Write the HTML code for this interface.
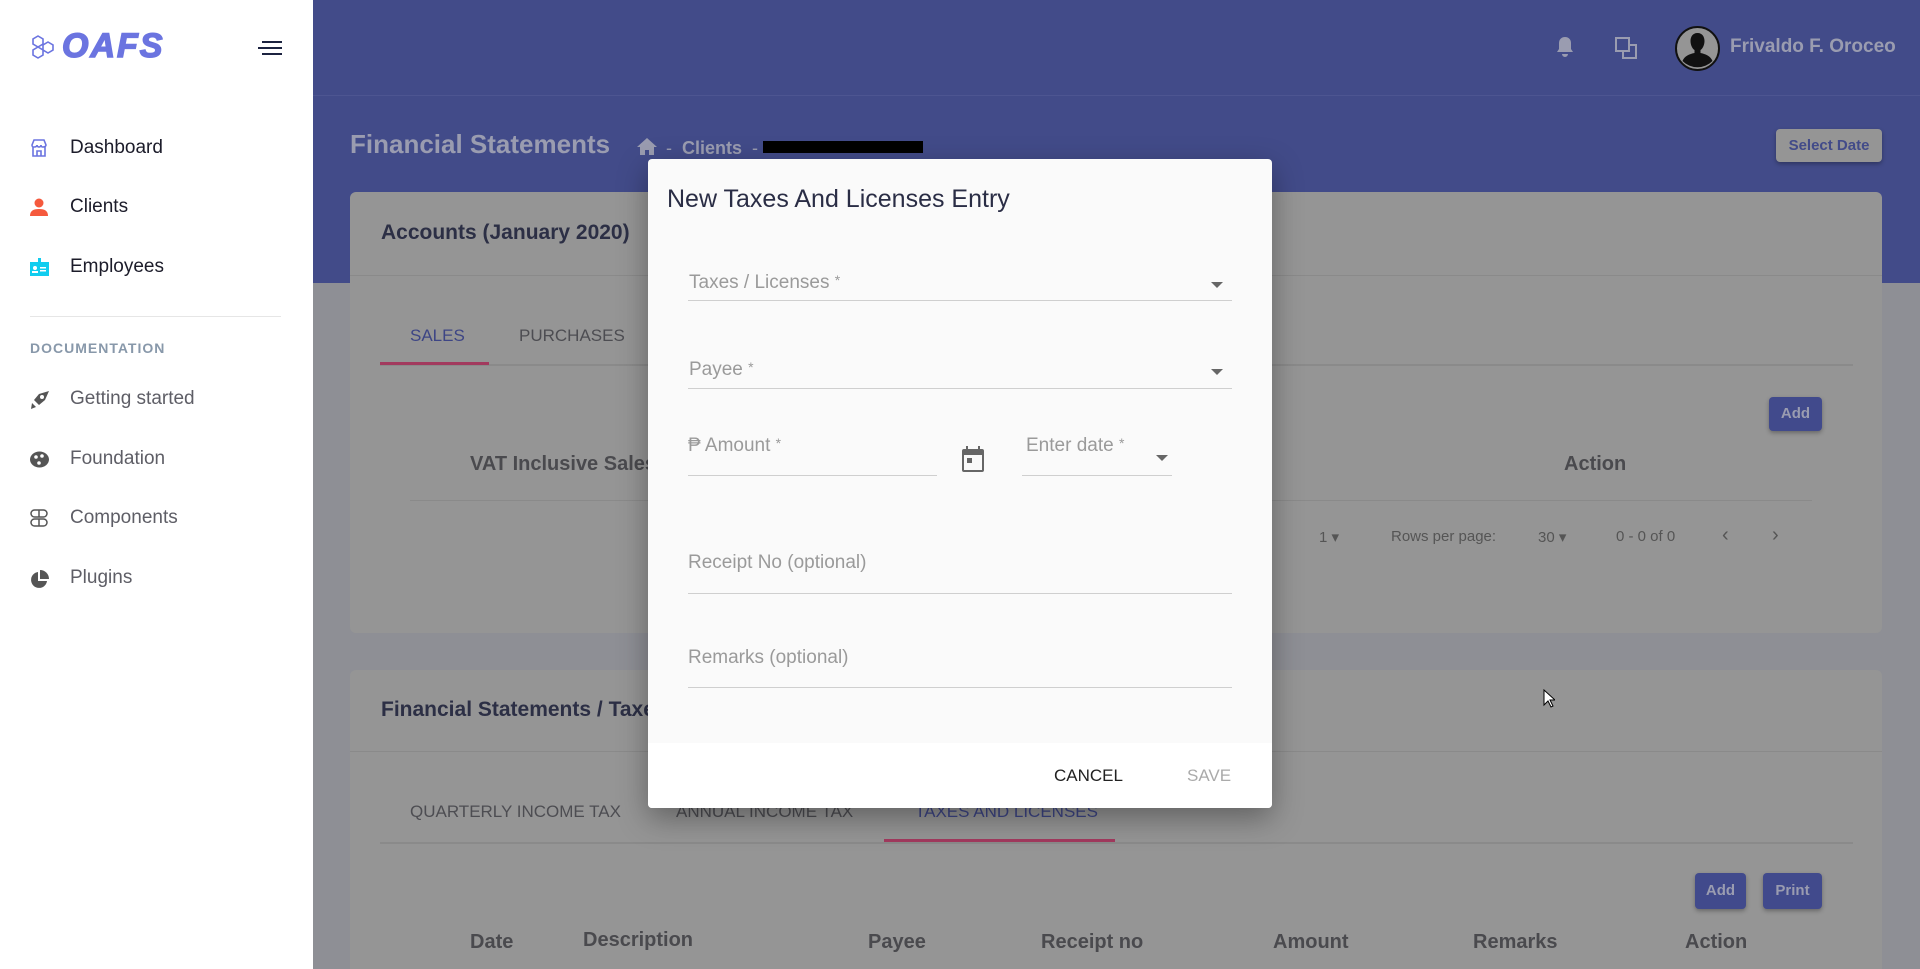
<!DOCTYPE html>
<html><head><meta charset="utf-8"><style>
*{box-sizing:border-box;margin:0;padding:0}
html{width:1920px;height:969px;overflow:hidden}
body{width:1920px;height:969px;overflow:hidden;position:relative;background:#8e8f95;font-family:"Liberation Sans",sans-serif}
.a{position:absolute;white-space:nowrap}
.side{position:absolute;left:0;top:0;width:313px;height:969px;background:#fff}
.nav{position:absolute;left:70px;font-size:19px;color:#1c1c2a}
.doc{color:#5e5e66}
.ic{position:absolute;left:30px}
.card{position:absolute;left:350px;width:1532px;background:#959595;border-radius:6px}
.hl{position:absolute;height:2px;background:#8a8a8a}
.btn{position:absolute;background:#414a8c;border-radius:4px;color:#9a9cb0;font-weight:bold;font-size:15px;text-align:center;box-shadow:0 2px 4px rgba(0,0,0,.3)}
.th{position:absolute;font-weight:bold;font-size:20px;color:#4a4a4e}
.tab{position:absolute;font-size:17px;color:#4d4d52}
.lab{position:absolute;font-size:19px;color:#9a9a9a}
.ln{position:absolute;height:1px;background:#cfcfcf}
.arr{position:absolute;width:0;height:0;border-left:6px solid transparent;border-right:6px solid transparent;border-top:6px solid #666}
</style></head><body>
<div class="a" style="left:313px;top:0;width:1607px;height:283px;background:#424b89"></div>
<div class="a" style="left:313px;top:95px;width:1607px;height:1px;background:#4d5591"></div>
<svg class="a" style="left:1555px;top:36px" width="20" height="22" viewBox="0 0 20 22"><path d="M10 1c-4 0-6 3-6 6v6l-2 3h16l-2-3V7c0-3-2-6-6-6z M7 18a3 3 0 0 0 6 0z" fill="#9a9cb0"/></svg>
<svg class="a" style="left:1615px;top:37px" width="22" height="22" viewBox="0 0 22 22" fill="none" stroke="#9a9cb0" stroke-width="2"><rect x="1" y="1" width="13" height="13"/><path d="M8 14v7h13V8h-7"/></svg>
<svg class="a" style="left:1675px;top:26px" width="45" height="45" viewBox="0 0 45 45"><circle cx="22.5" cy="22.5" r="21.5" fill="#959595" stroke="#111" stroke-width="2"/><path d="M22.5 7c-5 0-7 4-7 8 0 4 2 8 4 9v3c-5 1-10 3-12 8a21 21 0 0 0 30 0c-2-5-7-7-12-8v-3c2-1 4-5 4-9 0-4-2-8-7-8z" fill="#111"/></svg>
<div class="a" style="left:1730px;top:36px;font-size:19px;font-weight:bold;color:#9a9cb0">Frivaldo F. Oroceo</div>
<div class="a" style="left:350px;top:129px;font-size:26px;font-weight:bold;color:#9a9cb0">Financial Statements</div>
<svg class="a" style="left:637px;top:138px" width="20" height="17" viewBox="0 0 20 17"><path d="M10 0L0 9h3v8h5v-5h4v5h5V9h3z" fill="#9a9cb0"/></svg>
<div class="a" style="left:666px;top:138px;font-size:18px;color:#9a9cb0">-&nbsp; <b>Clients</b> &nbsp;-</div>
<div class="a" style="left:763px;top:141px;width:160px;height:12px;background:#000"></div>
<div class="btn" style="left:1776px;top:129px;width:106px;height:33px;line-height:33px;background:#959595;color:#424b89">Select Date</div>
<div class="card" style="top:192px;height:441px"></div>
<div class="a" style="left:381px;top:221px;font-size:21px;font-weight:bold;color:#2c2f45">Accounts (January 2020)</div>
<div class="hl" style="left:350px;top:275px;width:1532px;height:1px"></div>
<div class="tab" style="left:410px;top:326px;color:#3d4585">SALES</div>
<div class="tab" style="left:519px;top:326px">PURCHASES</div>
<div class="hl" style="left:380px;top:364px;width:1473px"></div>
<div class="a" style="left:380px;top:362px;width:109px;height:3px;background:#a23a5e"></div>
<div class="btn" style="left:1769px;top:397px;width:53px;height:34px;line-height:34px">Add</div>
<div class="th" style="left:470px;top:453px">VAT Inclusive Sales</div>
<div class="th" style="left:1564px;top:453px">Action</div>
<div class="hl" style="left:410px;top:500px;width:1402px;height:1px"></div>
<div class="a" style="left:1319px;top:528px;font-size:15px;color:#555">1 ▾</div>
<div class="a" style="left:1391px;top:528px;font-size:15px;color:#555">Rows per page:</div>
<div class="a" style="left:1538px;top:528px;font-size:15px;color:#555">30 ▾</div>
<div class="a" style="left:1616px;top:528px;font-size:15px;color:#555">0 - 0 of 0</div>
<div class="a" style="left:1722px;top:524px;font-size:20px;color:#555">‹</div>
<div class="a" style="left:1772px;top:524px;font-size:20px;color:#555">›</div>
<div class="card" style="top:670px;height:299px;border-radius:6px 6px 0 0"></div>
<div class="a" style="left:381px;top:698px;font-size:21px;font-weight:bold;color:#2c2f45">Financial Statements / Taxes</div>
<div class="hl" style="left:350px;top:751px;width:1532px;height:1px"></div>
<div class="tab" style="left:410px;top:802px">QUARTERLY INCOME TAX</div>
<div class="tab" style="left:676px;top:802px">ANNUAL INCOME TAX</div>
<div class="tab" style="left:915px;top:802px;color:#3d4585">TAXES AND LICENSES</div>
<div class="hl" style="left:380px;top:842px;width:1473px"></div>
<div class="a" style="left:884px;top:839px;width:231px;height:3px;background:#a23a5e"></div>
<div class="btn" style="left:1695px;top:873px;width:51px;height:36px;line-height:36px">Add</div>
<div class="btn" style="left:1763px;top:873px;width:59px;height:36px;line-height:36px">Print</div>
<div class="th" style="left:470px;top:931px">Date</div>
<div class="th" style="left:583px;top:929px">Description</div>
<div class="th" style="left:868px;top:931px">Payee</div>
<div class="th" style="left:1041px;top:931px">Receipt no</div>
<div class="th" style="left:1273px;top:931px">Amount</div>
<div class="th" style="left:1473px;top:931px">Remarks</div>
<div class="th" style="left:1685px;top:931px">Action</div>
<div class="side">
<div class="a" style="left:30px;top:34px"><svg width="28" height="26" viewBox="0 0 28 26" fill="none" stroke="#6b74e0" stroke-width="1.6"><path d="M8 2l5 3v5l-5 3-5-3V5z M8 13l5 3v5l-5 3-5-3v-5z M18 8l5 3v5l-5 3-5-3v-5z"/></svg></div>
<div class="a" style="left:62px;top:27px;font-size:34px;font-weight:900;font-style:italic;color:#6b74e0;letter-spacing:2px;-webkit-text-stroke:1.5px #6b74e0">OAFS</div>
<svg class="a" style="left:258px;top:40px" width="24" height="16"><path d="M4 2h20M0 8h24M4 14h20" stroke="#1c2340" stroke-width="2"/></svg>
<svg class="ic" style="top:139px" width="18" height="18" viewBox="0 0 18 18" fill="none" stroke="#6b74e0" stroke-width="1.6"><path d="M2 6l2-5h10l2 5c0 2-2 2-3.5 2S11 6 11 6c0 2-2 2-2 2S7 8 7 6c0 2-2 2-3 2S2 8 2 6z M3 8v9h12V8 M7 17v-5h4v5"/></svg>
<div class="nav" style="top:137px">Dashboard</div>
<svg class="ic" style="top:198px" width="18" height="18" viewBox="0 0 18 18" fill="#f5593d"><circle cx="9" cy="5" r="4.5"/><path d="M0 18c0-5 3-7 9-7s9 2 9 7z"/></svg>
<div class="nav" style="top:196px">Clients</div>
<svg class="ic" style="top:258px" width="19" height="18" viewBox="0 0 19 18" fill="#11cdef"><rect x="0" y="4" width="19" height="14"/><rect x="8" y="0" width="3" height="5"/><circle cx="5" cy="10" r="2" fill="#fff"/><path d="M2 15h6v-2H2zM10 9h6v1.5h-6zM10 12h6v1.5h-6z" fill="#fff"/></svg>
<div class="nav" style="top:256px">Employees</div>
<div class="a" style="left:30px;top:316px;width:251px;height:1px;background:#e6e6e6"></div>
<div class="a" style="left:30px;top:340px;font-size:14px;font-weight:bold;color:#8898aa;letter-spacing:1px">DOCUMENTATION</div>
<svg class="ic" style="top:391px" width="19" height="18" viewBox="0 0 19 18" fill="#555"><path d="M19 0L9 3 4 9l5 5 6-5zM2 12l4 4-5 2z"/><circle cx="12" cy="6" r="2" fill="#fff"/></svg>
<div class="nav doc" style="top:388px">Getting started</div>
<svg class="ic" style="top:451px" width="19" height="17" viewBox="0 0 19 17" fill="#555"><ellipse cx="9.5" cy="8.5" rx="9.5" ry="8"/><circle cx="6" cy="6" r="1.8" fill="#fff"/><circle cx="12" cy="5" r="1.8" fill="#fff"/><circle cx="9" cy="12" r="1.8" fill="#fff"/></svg>
<div class="nav doc" style="top:448px">Foundation</div>
<svg class="ic" style="top:509px" width="18" height="18" viewBox="0 0 18 18" fill="none" stroke="#555" stroke-width="1.5"><rect x="1" y="1" width="16" height="7" rx="3.5"/><rect x="1" y="10" width="16" height="7" rx="3.5"/><path d="M9 1v7M9 10v7"/></svg>
<div class="nav doc" style="top:507px">Components</div>
<svg class="ic" style="top:570px" width="19" height="19" viewBox="0 0 19 19" fill="#555"><path d="M8 2a8 8 0 1 0 9 9H8z"/><path d="M10 0v9h9a9 9 0 0 0-9-9z"/></svg>
<div class="nav doc" style="top:567px">Plugins</div>
</div>
<div class="a" style="left:648px;top:159px;width:624px;height:649px;background:#fafafa;border-radius:4px;box-shadow:0 10px 30px rgba(0,0,0,.35);overflow:hidden">
<div class="a" style="left:0;top:584px;width:624px;height:65px;background:#fff"></div>
</div>
<div class="a" style="left:667px;top:185px;font-size:25px;color:#2a2d45">New Taxes And Licenses Entry</div>
<div class="lab" style="left:689px;top:272px">Taxes / Licenses <span style="font-size:14px;vertical-align:top">*</span></div>
<div class="ln" style="left:688px;top:300px;width:544px"></div>
<div class="arr" style="left:1211px;top:282px"></div>
<div class="lab" style="left:689px;top:359px">Payee <span style="font-size:14px;vertical-align:top">*</span></div>
<div class="ln" style="left:688px;top:388px;width:544px"></div>
<div class="arr" style="left:1211px;top:369px"></div>
<div class="lab" style="left:688px;top:435px">₱ Amount <span style="font-size:14px;vertical-align:top">*</span></div>
<div class="ln" style="left:688px;top:475px;width:249px"></div>
<svg class="a" style="left:962px;top:446px" width="22" height="26" viewBox="0 0 22 26" fill="#666"><path d="M4 0h2v3h10V0h2v3h2a2 2 0 0 1 2 2v19a2 2 0 0 1-2 2H2a2 2 0 0 1-2-2V5a2 2 0 0 1 2-2h2zM2 9v15h18V9z"/><rect x="5" y="12" width="5" height="5"/></svg>
<div class="lab" style="left:1026px;top:435px">Enter date <span style="font-size:14px;vertical-align:top">*</span></div>
<div class="ln" style="left:1022px;top:475px;width:150px"></div>
<div class="arr" style="left:1156px;top:455px"></div>
<div class="lab" style="left:688px;top:552px">Receipt No (optional)</div>
<div class="ln" style="left:688px;top:593px;width:544px"></div>
<div class="lab" style="left:688px;top:647px">Remarks (optional)</div>
<div class="ln" style="left:688px;top:687px;width:544px"></div>
<div class="a" style="left:1054px;top:766px;font-size:17px;color:#222">CANCEL</div>
<div class="a" style="left:1187px;top:766px;font-size:17px;color:#aaa">SAVE</div>
<svg class="a" style="left:1543px;top:689px" width="12" height="19" viewBox="0 0 12 19"><path d="M1 1v15l4-4 3 6 2-1-3-6h5z" fill="#fff" stroke="#000"/></svg>
</body></html>
